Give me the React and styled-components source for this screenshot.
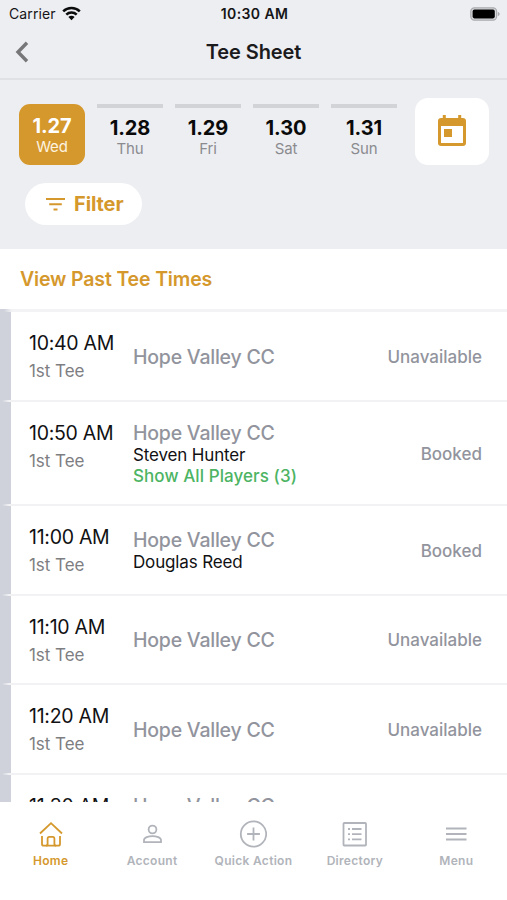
import React, { useState } from "react";
import styled, { createGlobalStyle } from "styled-components";

const GOLD = "#d5982c";

const GlobalStyle = createGlobalStyle`
  * {
    box-sizing: border-box;
  }

  body {
    margin: 0;
    background-color: #ffffff;
    font-family: Inter, "Liberation Sans", sans-serif;
  }

  button {
    border: none;
    padding: 0;
    background: none;
    font-family: inherit;
    cursor: pointer;
  }
`;

const Screen = styled.div`
  display: flex;
  flex-direction: column;
  width: 507px;
  height: 900px;
  overflow: hidden;
  background-color: #ffffff;
`;

const StatusBar = styled.div`
  display: grid;
  grid-template-columns: 1fr auto 1fr;
  align-items: center;
  height: 28px;
  padding: 0 7px 1px 9px;
  background-color: #edeef2;
  color: #151517;
  font-size: 14px;
`;

const Carrier = styled.div`
  display: flex;
  align-items: center;
  gap: 6px;
  letter-spacing: 0.1px;
`;

const Clock = styled.div`
  font-weight: 600;
  letter-spacing: 0.4px;
`;

const Battery = styled.div`
  display: flex;
  justify-content: flex-end;
`;

const NavBar = styled.div`
  display: grid;
  grid-template-columns: 60px 1fr 60px;
  align-items: center;
  height: 52px;
  padding-bottom: 2px;
  border-bottom: 2px solid #e0e1e5;
  background-color: #edeef2;
`;

const BackButton = styled.button`
  display: flex;
  padding-left: 14px;
`;

const Title = styled.div`
  text-align: center;
  font-size: 20px;
  font-weight: 600;
  letter-spacing: -0.1px;
  color: #1b1b1d;
`;

const Toolbar = styled.div`
  height: 169px;
  padding: 17px 18px 0 19px;
  background-color: #edeef2;
`;

const DateRow = styled.div`
  display: flex;
  align-items: flex-end;
  justify-content: space-between;
  height: 67.5px;
`;

const Days = styled.div`
  display: flex;
  gap: 12px;
`;

const Day = styled.button`
  display: flex;
  flex-direction: column;
  align-items: center;
  width: 66px;
  height: 61px;
  padding-top: ${props => (props.$active ? "11px" : "9px")};
  border-top: ${props => (props.$active ? "none" : "4px solid #d2d3d6")};
  border-radius: ${props => (props.$active ? "11px" : "0")};
  background-color: ${props => (props.$active ? GOLD : "transparent")};
  color: ${props => (props.$active ? "#ffffff" : "#0a0a0b")};
`;

const DayNumber = styled.span`
  font-size: 20px;
  font-weight: 700;
  line-height: 22px;
  letter-spacing: -0.1px;
`;

const DayName = styled.span`
  font-size: 15px;
  line-height: 20px;
  letter-spacing: -0.1px;
  color: ${props => (props.$active ? "#fdf3e0" : "#8b8b8f")};
`;

const CalendarButton = styled.button`
  display: flex;
  align-items: center;
  justify-content: center;
  width: 74px;
  height: 67px;
  border-radius: 13px;
  background-color: #ffffff;
`;

const FilterButton = styled.button`
  display: flex;
  align-items: center;
  gap: 9px;
  width: 117px;
  height: 42px;
  margin: 18px 0 0 6px;
  padding-left: 21px;
  border-radius: 21px;
  background-color: #ffffff;
  color: ${GOLD};
  font-size: 20px;
  font-weight: 700;
  letter-spacing: -0.1px;
`;

const PastLink = styled.button`
  flex: none;
  height: 60px;
  padding-left: 20px;
  text-align: left;
  color: ${GOLD};
  font-size: 19.5px;
  font-weight: 600;
  letter-spacing: -0.15px;
`;

const TeeList = styled.div`
  flex: 1;
  min-height: 0;
  overflow: hidden;
`;

const ListEdge = styled.div`
  height: 3px;
  background: linear-gradient(to right, #cfd2db 4px, #f3f3f5 12px);
`;

const Row = styled.div`
  display: grid;
  grid-template-columns: 104px 1fr auto;
  height: ${props => props.$height}px;
  padding: 0 25px 0 18px;
  border-left: 11px solid #cfd2db;
`;

const Separator = styled.div`
  height: 2px;
  background: linear-gradient(to right, #cfd2db 2px, #f2f2f5 9px);
`;

const TimeColumn = styled.div`
  padding-top: 17px;
  line-height: 28px;
  white-space: nowrap;
`;

const Time = styled.div`
  font-size: 19.5px;
  letter-spacing: -0.28px;
  color: #111113;
`;

const Tee = styled.div`
  font-size: 17px;
  letter-spacing: -0.05px;
  color: #7e7e82;
`;

const Booking = styled.div`
  align-self: center;
  padding-top: 1px;
`;

const Club = styled.div`
  font-size: 19.5px;
  font-weight: 500;
  line-height: 22px;
  letter-spacing: -0.23px;
  color: #92949d;
`;

const Player = styled.div`
  position: relative;
  top: 1px;
  font-size: 17px;
  line-height: 21px;
  letter-spacing: -0.15px;
  color: #111113;
`;

const ShowPlayers = styled.button`
  position: relative;
  top: 1px;
  display: block;
  font-size: 17px;
  font-weight: 500;
  line-height: 21px;
  letter-spacing: 0.08px;
  color: #4cb463;
`;

const Status = styled.div`
  align-self: center;
  padding-top: 1px;
  font-size: 17px;
  font-weight: 500;
  color: #92949d;
`;

const TabBar = styled.div`
  display: grid;
  grid-template-columns: repeat(5, 1fr);
  flex: none;
  height: 98px;
  background-color: #ffffff;
`;

const Tab = styled.button`
  display: flex;
  flex-direction: column;
  align-items: center;
  padding-top: 18px;
  color: ${props => (props.$active ? GOLD : "#b1b4ba")};
`;

const TabLabel = styled.span`
  margin-top: 5px;
  font-size: 12px;
  font-weight: 600;
  line-height: 16px;
  letter-spacing: 0.3px;
  white-space: nowrap;
`;

const TabIcon = styled.svg.attrs({ width: 28, height: 28, viewBox: "0 0 28 28" })`
  display: block;
  fill: none;
  stroke: currentColor;
  stroke-width: 1.8;
`;

const days = [
  { number: "1.27", name: "Wed" },
  { number: "1.28", name: "Thu" },
  { number: "1.29", name: "Fri" },
  { number: "1.30", name: "Sat" },
  { number: "1.31", name: "Sun" }
];

const teeTimes = [
  { time: "10:40 AM", status: "Unavailable", height: 88 },
  { time: "10:50 AM", player: "Steven Hunter", count: 3, status: "Booked", height: 102 },
  { time: "11:00 AM", player: "Douglas Reed", status: "Booked", height: 88 },
  { time: "11:10 AM", status: "Unavailable", height: 87 },
  { time: "11:20 AM", status: "Unavailable", height: 88 },
  { time: "11:30 AM", player: "Steven Hunter", count: 3, status: "Booked", height: 102 }
];

const tabs = [
  {
    label: "Home",
    icon: (
      <TabIcon>
        <path d="M3 13.5 14 3.2l11 10.3" />
        <path d="M5 16v8a1.7 1.7 0 0 0 1.7 1.7h14.6A1.7 1.7 0 0 0 23 24v-8" />
        <path d="M8.9 25.7a1.7 1.7 0 0 0 1.7-1.7v-5.5a1.7 1.7 0 0 1 1.7-1.7h3.4a1.7 1.7 0 0 1 1.7 1.7V24a1.7 1.7 0 0 0 1.7 1.7" />
      </TabIcon>
    )
  },
  {
    label: "Account",
    icon: (
      <TabIcon>
        <circle cx="14.5" cy="9.5" r="3.9" />
        <path d="M6 22.2v-2.1c0-2.6 4.5-4 8.5-4s8.5 1.4 8.5 4v2.1z" />
      </TabIcon>
    )
  },
  {
    label: "Quick Action",
    icon: (
      <TabIcon>
        <circle cx="14.5" cy="14" r="12.7" />
        <path d="M14.5 7.6v12.8M8.1 14h12.8" />
      </TabIcon>
    )
  },
  {
    label: "Directory",
    icon: (
      <TabIcon>
        <rect x="2.5" y="3" width="22.5" height="22.5" rx="0.8" />
        <path d="M7 9h2M11 9h9.500M7 14.2h2M11 14.2h9.5M7 19.4h2M11 19.4h9.5" />
      </TabIcon>
    )
  },
  {
    label: "Menu",
    icon: (
      <TabIcon>
        <path d="M4 8.4h20.5M4 14h20.5M4 19.6h20.5" strokeWidth="2" />
      </TabIcon>
    )
  }
];

const WifiIcon = () => (
  <svg width="19" height="15" viewBox="0 0 19 15">
    <g fill="none" stroke="#0b0b0c" strokeWidth="2.5">
      <path d="M1.2 5.3a11.8 11.8 0 0 1 16.6 0" />
      <path d="M4.3 8.6a7.4 7.4 0 0 1 10.4 0" />
    </g>
    <path d="M6.4 11a4.4 4.4 0 0 1 6.2 0L9.5 14.2z" fill="#0b0b0c" />
  </svg>
);

const BatteryIcon = () => (
  <svg width="30" height="14" viewBox="0 0 30 14">
    <rect x="0.8" y="0.8" width="25.8" height="12.4" rx="3.6" fill="#d9dadd" stroke="#a9aaad" strokeWidth="1.2" />
    <rect x="2.6" y="2.6" width="22.2" height="8.8" rx="1.8" fill="#000000" />
    <path d="M27.8 4.8c2.4.8 2.4 3.6 0 4.4z" fill="#a9aaad" />
  </svg>
);

const BackIcon = () => (
  <svg width="15" height="22" viewBox="0 0 15 22">
    <path d="M13 1.8 4 11l9 9.2" fill="none" stroke="#77777a" strokeWidth="3.4" />
  </svg>
);

const CalendarIcon = () => (
  <svg width="28" height="32" viewBox="0 0 28 32">
    <path
      d="M4.8 0h3v3h12.4V0h3v3h1.5A3.3 3.3 0 0 1 28 6.3v21.4a3.3 3.3 0 0 1-3.3 3.3H3.3A3.3 3.3 0 0 1 0 27.7V6.3A3.3 3.3 0 0 1 3.3 3h1.5zM3 11v17h22V11z"
      fill={GOLD}
      fillRule="evenodd"
    />
    <rect x="6" y="14" width="8" height="8" fill={GOLD} />
  </svg>
);

const FilterIcon = () => (
  <svg width="19" height="14" viewBox="0 0 19 14">
    <path d="M0 2h19M3.2 7.2h12.6M7.5 12.4h4" stroke={GOLD} strokeWidth="2" />
  </svg>
);

const TeeTime = props => (
  <React.Fragment>
    <Row $height={props.height}>
      <TimeColumn>
        <Time>{props.time}</Time>
        <Tee>1st Tee</Tee>
      </TimeColumn>
      <Booking>
        <Club>Hope Valley CC</Club>
        {props.player ? <Player>{props.player}</Player> : null}
        {props.count ? (
          <ShowPlayers>Show All Players ({props.count})</ShowPlayers>
        ) : null}
      </Booking>
      <Status>{props.status}</Status>
    </Row>
    <Separator />
  </React.Fragment>
);

const App = () => {
  const [day, updateDay] = useState("1.27");
  const [tab, updateTab] = useState("Home");

  return (
    <Screen>
      <GlobalStyle />
      <StatusBar>
        <Carrier>
          Carrier
          <WifiIcon />
        </Carrier>
        <Clock>10:30 AM</Clock>
        <Battery>
          <BatteryIcon />
        </Battery>
      </StatusBar>
      <NavBar>
        <BackButton aria-label="Back">
          <BackIcon />
        </BackButton>
        <Title>Tee Sheet</Title>
      </NavBar>
      <Toolbar>
        <DateRow>
          <Days>
            {days.map(({ number, name }) => (
              <Day
                key={number}
                $active={day === number}
                onClick={() => updateDay(number)}
              >
                <DayNumber>{number}</DayNumber>
                <DayName $active={day === number}>{name}</DayName>
              </Day>
            ))}
          </Days>
          <CalendarButton aria-label="Calendar">
            <CalendarIcon />
          </CalendarButton>
        </DateRow>
        <FilterButton>
          <FilterIcon />
          Filter
        </FilterButton>
      </Toolbar>
      <PastLink>View Past Tee Times</PastLink>
      <TeeList>
        <ListEdge />
        {teeTimes.map(teeTime => (
          <TeeTime key={teeTime.time} {...teeTime} />
        ))}
      </TeeList>
      <TabBar>
        {tabs.map(({ label, icon }) => (
          <Tab
            key={label}
            $active={tab === label}
            onClick={() => updateTab(label)}
          >
            {icon}
            <TabLabel>{label}</TabLabel>
          </Tab>
        ))}
      </TabBar>
    </Screen>
  );
};

export default App;
